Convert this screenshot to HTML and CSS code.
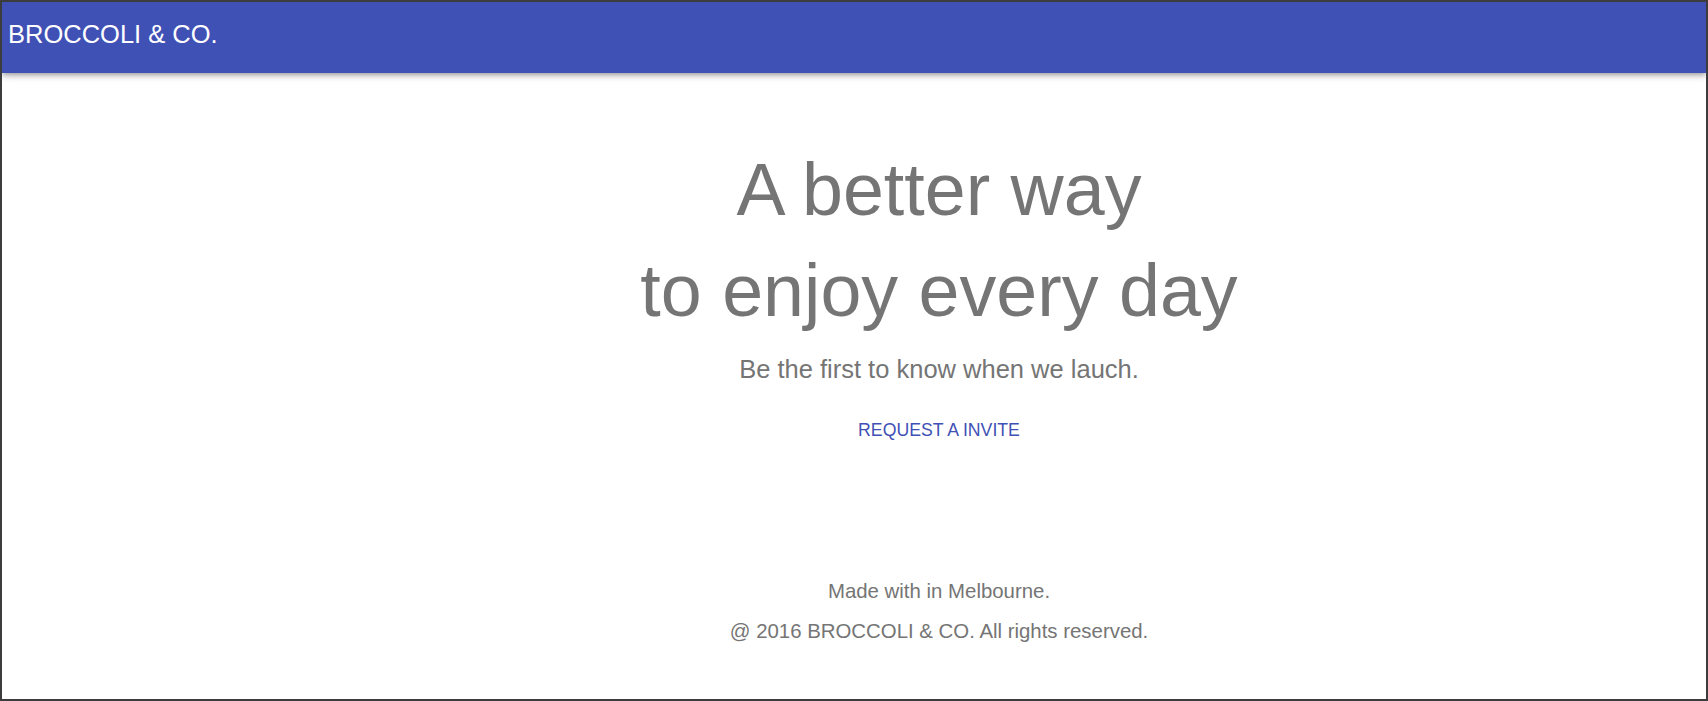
FILE: index.html
```html
<!DOCTYPE html>
<html lang="en">
<head>
<meta charset="utf-8">
<title>Broccoli &amp; Co.</title>
<link rel="stylesheet" href="styles.css">
</head>
<body>
<div class="page">
  <header class="app-header">
    <span class="app-title">BROCCOLI &amp; CO.</span>
  </header>
  <main class="hero">
    <h1 class="hero-title">A better way<br>to enjoy every day</h1>
    <p class="hero-sub">Be the first to know when we lauch.</p>
    <button class="btn-invite" type="button">Request a invite</button>
  </main>
  <footer class="app-footer">
    <p class="footer-line">Made with  in Melbourne.</p>
    <p class="footer-line">@ 2016 BROCCOLI &amp; CO. All rights reserved.</p>
  </footer>
</div>
</body>
</html>
```
FILE: styles.css
```css
* { box-sizing: border-box; }
html, body { margin: 0; padding: 0; background: #ffffff; }
body { font-family: "Liberation Sans", Arial, sans-serif; }

.page {
  width: 1708px;
  height: 701px;
  border: 2px solid #3c3c3c;
  display: flex;
  flex-direction: column;
  overflow: hidden;
}

.app-header {
  height: 70.7px;
  flex: none;
  background: #3f51b5;
  padding: 16.5px 0 0 6px;
  box-shadow: 0 4px 5px 0 rgba(0,0,0,.14), 0 1px 10px 0 rgba(0,0,0,.12), 0 2px 4px -1px rgba(0,0,0,.2);
  position: relative;
  z-index: 1;
}
.app-title {
  display: block;
  color: #ffffff;
  font-size: 25.5px;
  line-height: 30px;
}

.hero {
  padding: 67.5px 0 0 170px;
  text-align: center;
}
.hero-title {
  margin: 0;
  font-weight: 400;
  font-size: 73.6px;
  line-height: 100.7px;
  color: #757575;
}
.hero-sub {
  margin: 11.3px 0 0;
  font-size: 25.5px;
  line-height: 32px;
  color: #757575;
}
.btn-invite {
  margin-top: 26.3px;
  height: 39.6px;
  padding: 0 17.6px;
  border: none;
  background: transparent;
  font-family: "Liberation Sans", Arial, sans-serif;
  font-size: 17.7px;
  line-height: 39.6px;
  text-transform: uppercase;
  color: #3f51b5;
  cursor: pointer;
}

.app-footer {
  margin-top: 120px;
  padding-left: 170px;
  text-align: center;
}
.footer-line {
  margin: 0;
  font-size: 20.4px;
  line-height: 40.7px;
  color: #757575;
}
```
